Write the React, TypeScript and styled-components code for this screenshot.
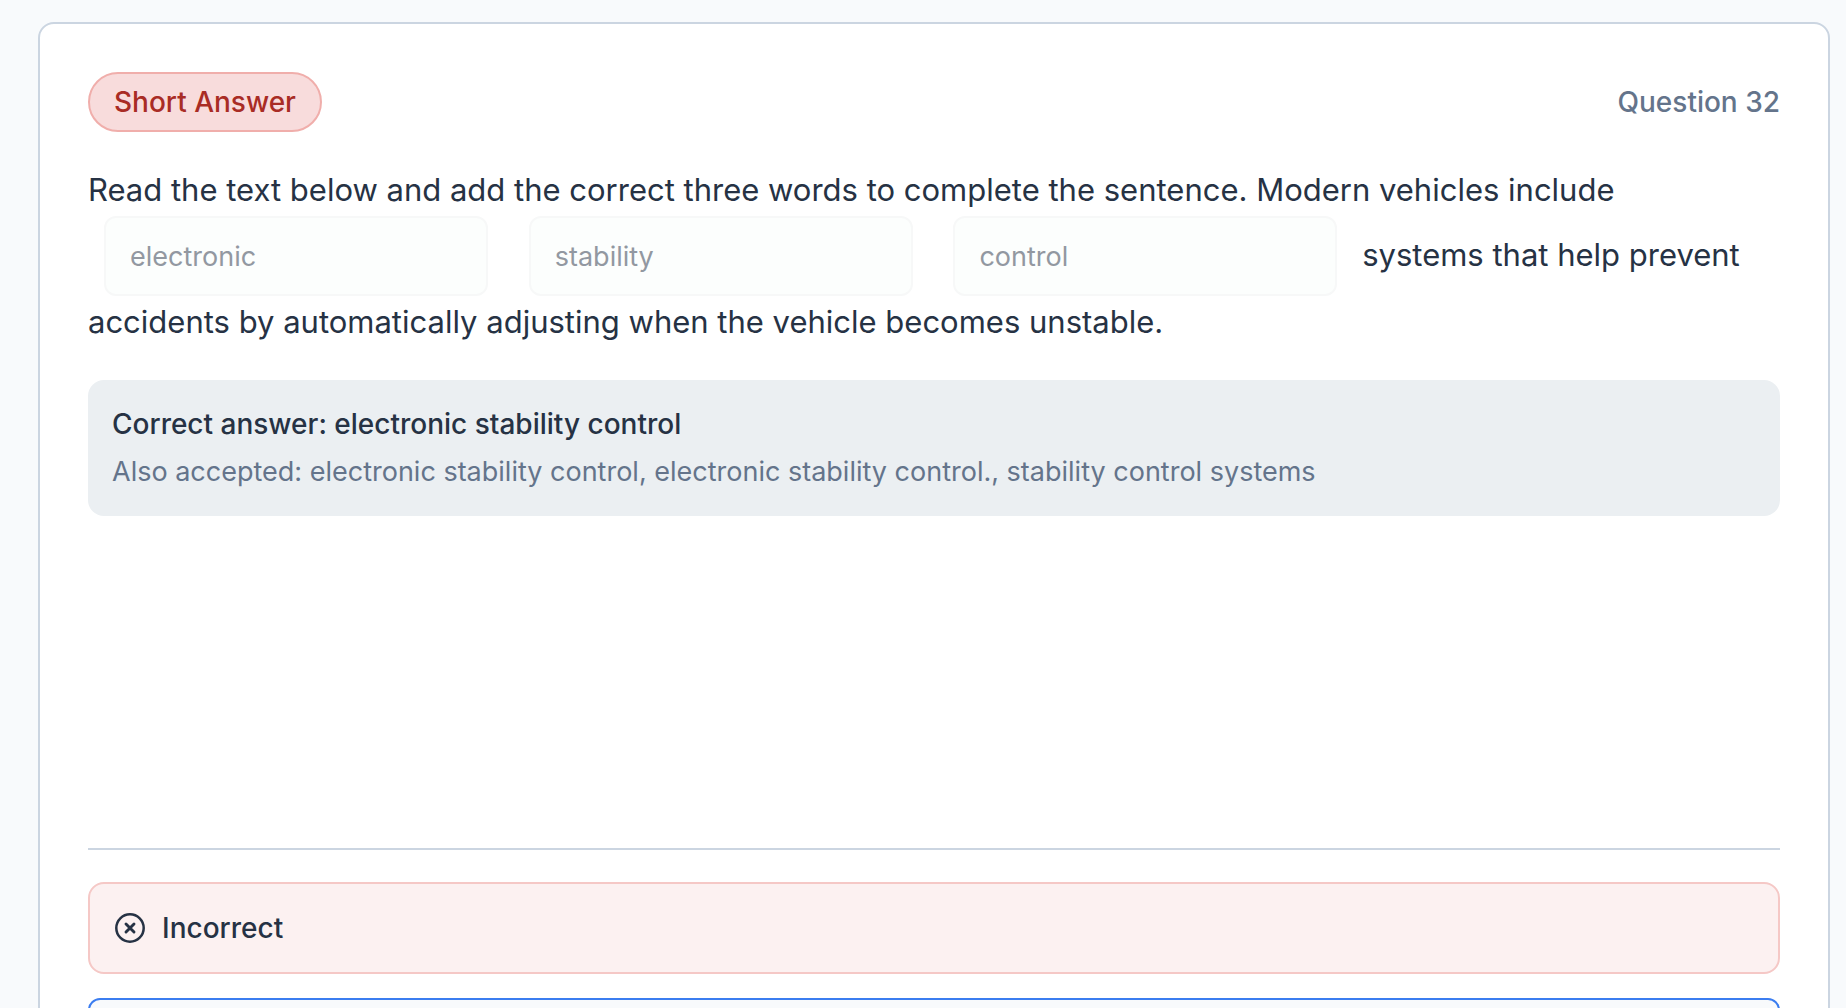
import React from "react";
import styled, { createGlobalStyle } from "styled-components";

const GlobalStyle = createGlobalStyle`
  *, *::before, *::after { box-sizing: border-box; }
  body {
    margin: 0;
    background: #f8fafc;
    color: #263244;
    font-family: Inter, "Liberation Sans", sans-serif;
  }
`;

const Page = styled.main`
  height: 100vh;
  overflow: hidden;
  padding: 22px 16px 0 38px;
`;

const Card = styled.article`
  display: flex;
  flex-direction: column;
  padding: 48px;
  background: #fff;
  border: 2px solid #cbd5e1;
  border-radius: 16px;
`;

const CardHeader = styled.header`
  display: flex;
  align-items: center;
  justify-content: space-between;
  margin-bottom: 32px;
`;

const Badge = styled.span`
  padding: 8px 24px;
  border: 2px solid #f0aeab;
  border-radius: 30px;
  background: #f8dcdc;
  color: #a92c25;
  font-size: 28px;
  font-weight: 500;
  line-height: 40px;
`;

const QuestionNumber = styled.span`
  color: #64748b;
  font-size: 28px;
  font-weight: 500;
  line-height: 40px;
`;

const Body = styled.section`
  min-height: 684px;
`;

const Prompt = styled.p`
  margin: 0 0 32px;
  font-size: 31px;
  line-height: 52px;
`;

const Blank = styled.input`
  width: 384px;
  height: 80px;
  margin: 0 16px;
  padding: 0 24px;
  vertical-align: baseline;
  border: 2px solid #f7f8f8;
  border-radius: 12px;
  background: #fcfefd;
  color: #9298a1;
  font-family: inherit;
  font-size: 27px;
`;

const AnswerBox = styled.div`
  display: flex;
  flex-direction: column;
  gap: 8px;
  padding: 24px;
  border-radius: 16px;
  background: #ebeff2;
  line-height: 40px;
`;

const CorrectAnswer = styled.p`
  margin: 0;
  font-size: 28px;
  font-weight: 500;
`;

const AcceptedAnswers = styled.p`
  margin: 0;
  color: #64748b;
  font-size: 27px;
`;

const Feedback = styled.footer`
  display: flex;
  flex-direction: column;
  gap: 24px;
  padding-top: 32px;
  border-top: 2px solid #cbd5e1;
`;

const ResultAlert = styled.div`
  display: flex;
  align-items: center;
  gap: 16px;
  padding: 24px;
  border: 2px solid #f5c8c6;
  border-radius: 16px;
  background: #fcf1f1;
  font-size: 28px;
  font-weight: 500;
  line-height: 40px;
`;

const Explanation = styled.section`
  min-height: 120px;
  border: 2px solid #3b7df0;
  border-radius: 12px;
  background: #f8fafc;
`;

const IncorrectIcon = () => (
  <svg width="32" height="32" viewBox="0 0 32 32" fill="none" stroke="currentColor" strokeWidth="2.5" strokeLinecap="round" aria-hidden="true">
    <circle cx="16" cy="16" r="13.7" />
    <path strokeWidth="2.9" d="m12 12 8 8m0-8-8 8" />
  </svg>
);

const blanks = ["electronic", "stability", "control"];

export default function App() {
  return (
    <>
      <GlobalStyle />
      <Page>
        <Card>
          <CardHeader>
            <Badge>Short Answer</Badge>
            <QuestionNumber>Question 32</QuestionNumber>
          </CardHeader>
          <Body>
            <Prompt>
              Read the text below and add the correct three words to complete the sentence. Modern vehicles include{" "}
              {blanks.map((word, i) => (
                <React.Fragment key={word}>
                  <Blank type="text" aria-label={`Blank ${i + 1}`} defaultValue={word} disabled />{" "}
                </React.Fragment>
              ))}
              systems that help prevent accidents by automatically adjusting when the vehicle becomes unstable.
            </Prompt>
            <AnswerBox>
              <CorrectAnswer>Correct answer: electronic stability control</CorrectAnswer>
              <AcceptedAnswers>
                Also accepted: electronic stability control, electronic stability control., stability control systems
              </AcceptedAnswers>
            </AnswerBox>
          </Body>
          <Feedback>
            <ResultAlert role="status">
              <IncorrectIcon />
              Incorrect
            </ResultAlert>
            <Explanation />
          </Feedback>
        </Card>
      </Page>
    </>
  );
}
